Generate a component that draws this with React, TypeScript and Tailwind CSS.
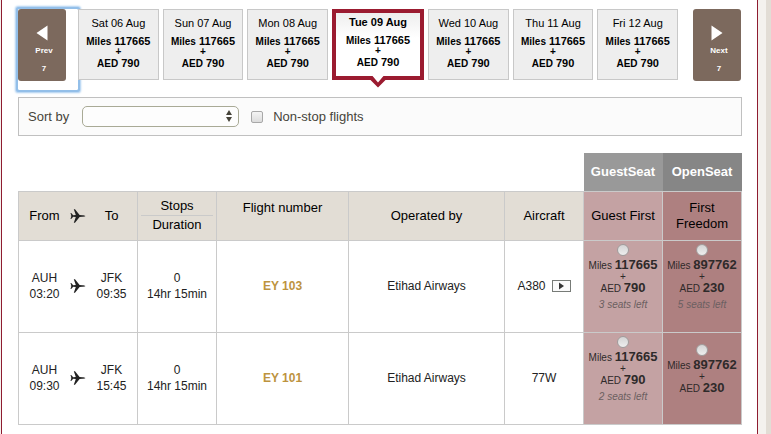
import { useState } from "react";

type Fare = { miles: string; aed: string; seats?: string };

type Flight = {
  number: string;
  from: string;
  departs: string;
  to: string;
  arrives: string;
  stops: number;
  duration: string;
  carrier: string;
  aircraft: string;
  hasVideo?: boolean;
  guest: Fare;
  open: Fare;
};

const days = [
  "Sat 06 Aug",
  "Sun 07 Aug",
  "Mon 08 Aug",
  "Tue 09 Aug",
  "Wed 10 Aug",
  "Thu 11 Aug",
  "Fri 12 Aug",
];

const flights: Flight[] = [
  {
    number: "EY 103",
    from: "AUH",
    departs: "03:20",
    to: "JFK",
    arrives: "09:35",
    stops: 0,
    duration: "14hr 15min",
    carrier: "Etihad Airways",
    aircraft: "A380",
    hasVideo: true,
    guest: { miles: "117665", aed: "790", seats: "3 seats left" },
    open: { miles: "897762", aed: "230", seats: "5 seats left" },
  },
  {
    number: "EY 101",
    from: "AUH",
    departs: "09:30",
    to: "JFK",
    arrives: "15:45",
    stops: 0,
    duration: "14hr 15min",
    carrier: "Etihad Airways",
    aircraft: "77W",
    guest: { miles: "117665", aed: "790", seats: "2 seats left" },
    open: { miles: "897762", aed: "230" },
  },
];

function PlaneIcon() {
  return (
    <svg viewBox="0 0 16 14" className="w-4 h-3.5 mx-auto" aria-hidden="true">
      <path
        d="M15.4 7 C15 6.4 13.6 6.2 12.2 6.2 L9.6 6.1 L5 0.3 L3.8 0.3 L5.8 6 L3.2 6.2 L1.2 4 L0.4 4.2 L1.4 6.4 L0.6 7 L1.4 7.6 L0.4 9.8 L1.2 10 L3.2 7.8 L5.8 8 L3.8 13.7 L5 13.7 L9.6 7.9 L12.2 7.8 C13.6 7.8 15 7.6 15.4 7 Z"
        fill="#222"
      />
    </svg>
  );
}

function PageButton({ label, direction }: { label: string; direction: "prev" | "next" }) {
  return (
    <button
      type="button"
      className="w-12 h-[72px] rounded-[3px] bg-[#7c695d] text-white text-[8px] leading-[18px] font-bold flex flex-col items-center pt-4"
    >
      <svg viewBox="0 0 12 16" className="w-3 h-4 mb-px shrink-0" aria-hidden="true">
        <path d={direction === "prev" ? "M11.5 0.5 L0.5 8 L11.5 15.5 Z" : "M0.5 0.5 L11.5 8 L0.5 15.5 Z"} fill="#fff" />
      </svg>
      <span className="pl-1">{label}</span>
      <span className="pl-1">7</span>
    </button>
  );
}

function DayCard({ day, selected, onSelect }: { day: string; selected: boolean; onSelect: () => void }) {
  return (
    <button
      type="button"
      onClick={onSelect}
      className={`relative h-[71px] flex flex-col items-center text-[11px] leading-[14px] text-black ${
        selected
          ? "w-[92px] shrink-0 border-4 border-[#9b1b30] bg-linear-to-b from-[#eeeeee] to-white to-40% pt-0.5"
          : "flex-1 min-w-0 border border-[#c8c8c8] bg-[#eeeeee] pt-1.5"
      }`}
    >
      <span className={selected ? "font-bold mb-1" : "mb-1"}>{day}</span>
      <b>
        <span className="text-[10px]">Miles</span> 117665
      </b>
      <b className="text-[10px] leading-[6px] pb-px">+</b>
      <b>
        <span className="text-[10px]">AED</span> 790
      </b>
      {selected && (
        <svg viewBox="0 0 18 13" className="absolute left-1/2 -translate-x-1/2 -bottom-3 w-[18px] h-[13px]" aria-hidden="true">
          <path d="M2 0 L9 8.5 L16 0 Z" fill="#fff" />
          <path d="M0.5 1 L3.5 1 L9 7.5 L14.5 1 L17.5 1 L17.5 4 L9 12.5 L0.5 4 Z" fill="#9b1b30" />
        </svg>
      )}
    </button>
  );
}

function FareCell({ fare, name, label }: { fare: Fare; name: string; label: string }) {
  return (
    <div className="flex flex-col items-center pb-4 text-[10px] leading-4 text-[#2e2a2a]">
      <input
        type="radio"
        name={name}
        aria-label={label}
        className="appearance-none w-3 h-3 mb-px rounded-full border border-[#a09a9a] bg-linear-to-b from-[#d4d4d4] to-[#eeeeee] checked:bg-[#666]"
      />
      <span className="whitespace-nowrap">
        Miles <b className="text-[13px]">{fare.miles}</b>
      </span>
      <span className="leading-[6px]">+</span>
      <span>
        AED <b className="text-[13px]">{fare.aed}</b>
      </span>
      {fare.seats && <i className="text-[#6b5f60]">{fare.seats}</i>}
    </div>
  );
}

export default function App() {
  const [selectedDay, setSelectedDay] = useState("Tue 09 Aug");

  return (
    <div className="bg-[#e2ddd5] pr-[5px] font-['Liberation_Sans',Arial,sans-serif]">
      <div className="bg-[#f4f2ee] pr-2">
        <main className="min-h-screen ml-px border-x border-[#8e1c30] bg-white pl-4 pr-[15px] pt-[9px] pb-2">
          {/* Date strip */}
          <div className="flex items-start">
            <div className="w-[60px] h-[81px] shrink-0 rounded-[1px] shadow-[0_0_0_2px_#93bfe9,0_0_2px_3px_#a9cdf0]">
              <PageButton label="Prev" direction="prev" />
            </div>
            <div className="relative flex flex-1 gap-1">
              {days.map((day) => (
                <DayCard key={day} day={day} selected={day === selectedDay} onSelect={() => setSelectedDay(day)} />
              ))}
            </div>
            <div className="ml-[15px] mr-px">
              <PageButton label="Next" direction="next" />
            </div>
          </div>

          {/* Sort and filter */}
          <div className="mt-[7px] h-[39px] flex items-center border border-[#c0c0c0] bg-[#fbfbfb] px-[9px] text-[13px] text-[#46443a]">
            <label htmlFor="sort">Sort by</label>
            <div className="relative ml-[13px] w-[157px] h-[21px]">
              <select
                id="sort"
                className="appearance-none w-full h-full rounded-[5px] border border-[#a9aa96] bg-[#fdfdfd] px-2 text-[11px]"
              >
                <option value=""></option>
                <option value="duration">Duration</option>
                <option value="departure">Departure</option>
              </select>
              <svg
                viewBox="0 0 6 12"
                className="absolute right-[7px] top-1 w-1.5 h-3 pointer-events-none"
                aria-hidden="true"
              >
                <path d="M3 0 L6 5 L0 5 Z M0 7 L6 7 L3 12 Z" fill="#46443a" />
              </svg>
            </div>
            <input
              id="nonstop"
              type="checkbox"
              className="appearance-none ml-3 w-3 h-3 rounded-[2px] border border-[#a8a8a8] bg-linear-to-b from-[#f4f4f4] to-[#dcdcdc] checked:bg-[#777]"
            />
            <label htmlFor="nonstop" className="ml-2.5">
              Non-stop flights
            </label>
          </div>

          {/* Results */}
          <table className="mt-[17px] w-full table-fixed border-collapse text-center text-xs leading-4 text-[#222]">
            <colgroup>
              <col className="w-[119px]" />
              <col className="w-[79px]" />
              <col className="w-[132px]" />
              <col className="w-[156px]" />
              <col className="w-[79px]" />
              <col className="w-[79px]" />
              <col className="w-[79px]" />
            </colgroup>
            <thead className="text-[13px] text-black">
              <tr className="h-[38px] text-white">
                <td colSpan={5}></td>
                <th className="bg-[#999999] font-bold">GuestSeat</th>
                <th className="bg-[#868686] font-bold">OpenSeat</th>
              </tr>
              <tr className="h-[49px] bg-[#e2ddd5] *:border *:border-[#cacaca] *:font-normal">
                <th>
                  <div className="grid grid-cols-[1fr_16px_1fr] items-center">
                    <span>From</span>
                    <PlaneIcon />
                    <span>To</span>
                  </div>
                </th>
                <th>
                  <div className="mx-[3px]">
                    <div className="border-b border-[#cacaca] pb-px">Stops</div>
                    <div className="pt-px">Duration</div>
                  </div>
                </th>
                <th className="pb-4">Flight number</th>
                <th>Operated by</th>
                <th>Aircraft</th>
                <th className="bg-[#c4a2a3]">Guest First</th>
                <th className="bg-[#ae8080]">
                  First
                  <br />
                  Freedom
                </th>
              </tr>
            </thead>
            <tbody>
              {flights.map((f) => (
                <tr key={f.number} className="h-[92px] *:border *:border-[#cacaca]">
                  <td>
                    <div className="grid grid-cols-[1fr_16px_1fr] items-center">
                      <span>
                        {f.from}
                        <br />
                        {f.departs}
                      </span>
                      <PlaneIcon />
                      <span>
                        {f.to}
                        <br />
                        {f.arrives}
                      </span>
                    </div>
                  </td>
                  <td>
                    {f.stops}
                    <br />
                    {f.duration}
                  </td>
                  <td>
                    <a href="#" className="font-bold text-[#bd933f]">
                      {f.number}
                    </a>
                  </td>
                  <td>{f.carrier}</td>
                  <td>
                    <span className="inline-flex items-center gap-1.5">
                      {f.aircraft}
                      {f.hasVideo && (
                        <button
                          type="button"
                          aria-label="Play video"
                          className="w-[19px] h-3 border border-[#777b77] bg-[#fafafa] flex items-center justify-center"
                        >
                          <svg viewBox="0 0 5 8" className="w-[5px] h-2" aria-hidden="true">
                            <path d="M0 0.5 L5 4 L0 7.5 Z" fill="#333" />
                          </svg>
                        </button>
                      )}
                    </span>
                  </td>
                  <td className="bg-[#c4a2a3]">
                    <FareCell fare={f.guest} name="fare" label={`GuestSeat ${f.number}`} />
                  </td>
                  <td className="bg-[#ae8080]">
                    <FareCell fare={f.open} name="fare" label={`OpenSeat ${f.number}`} />
                  </td>
                </tr>
              ))}
            </tbody>
          </table>
        </main>
      </div>
    </div>
  );
}
